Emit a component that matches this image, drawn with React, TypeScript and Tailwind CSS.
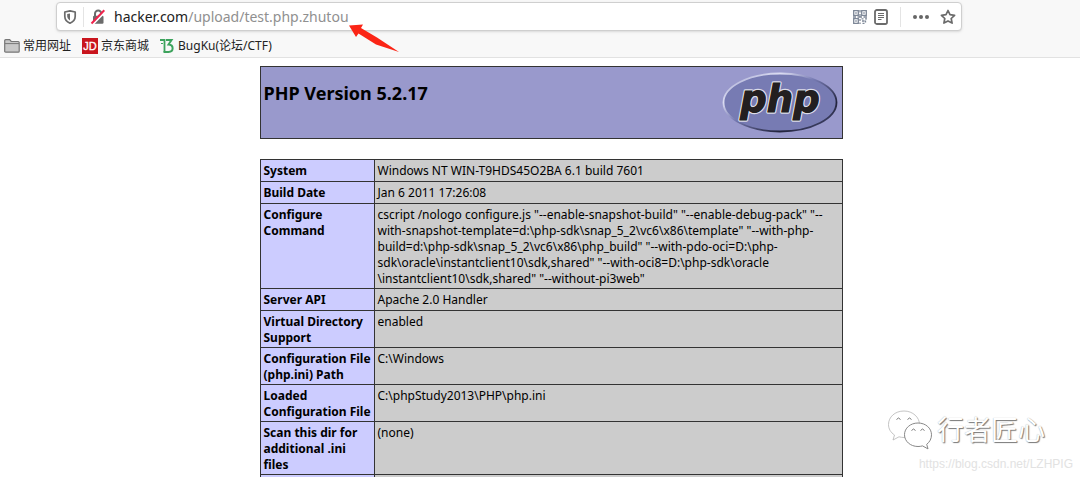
import React from "react";

const rows: { label: string; value: string }[] = [
  { label: "System", value: "Windows NT WIN-T9HDS45O2BA 6.1 build 7601" },
  { label: "Build Date", value: "Jan 6 2011 17:26:08" },
  {
    label: "Configure\nCommand",
    value:
      'cscript /nologo configure.js "--enable-snapshot-build" "--enable-debug-pack" "--\nwith-snapshot-template=d:\\php-sdk\\snap_5_2\\vc6\\x86\\template" "--with-php-\nbuild=d:\\php-sdk\\snap_5_2\\vc6\\x86\\php_build" "--with-pdo-oci=D:\\php-\nsdk\\oracle\\instantclient10\\sdk,shared" "--with-oci8=D:\\php-sdk\\oracle\n\\instantclient10\\sdk,shared" "--without-pi3web"',
  },
  { label: "Server API", value: "Apache 2.0 Handler" },
  { label: "Virtual Directory\nSupport", value: "enabled" },
  { label: "Configuration File\n(php.ini) Path", value: "C:\\Windows" },
  { label: "Loaded\nConfiguration File", value: "C:\\phpStudy2013\\PHP\\php.ini" },
  { label: "Scan this dir for\nadditional .ini\nfiles", value: "(none)" },
  { label: "", value: "" },
];

function ShieldIcon() {
  return (
    <svg width="14" height="16" viewBox="0 0 14 16" aria-hidden="true">
      <path d="M7 1.8 12.2 3v4.2c0 3.2-2 5.6-5.2 7-3.2-1.4-5.2-3.8-5.2-7V3z" fill="none" stroke="#6b6b6b" strokeWidth="1.7" strokeLinejoin="round" />
      <path d="M7 4.4v7C5.2 10.300 4.200 8.900 4.200 7V5z" fill="#6b6b6b" />
    </svg>
  );
}

function LockIcon() {
  return (
    <svg width="16" height="16" viewBox="0 0 16 16" aria-hidden="true">
      <path d="M5 7V4.800a3.200 3.200 0 0 1 6.400 0V7" fill="none" stroke="#6b6b6b" strokeWidth="2" />
      <rect x="3" y="6.700" width="10.500" height="8" rx="1.200" fill="#6b6b6b" />
      <path d="M2.600 15.600 15.400 2.400" stroke="#fff" strokeWidth="2" />
      <path d="M1.500 14.500 14.300 1.300" stroke="#f0244d" strokeWidth="2" />
    </svg>
  );
}

function QrIcon() {
  return (
    <svg width="14" height="14" viewBox="0 0 14 14" fill="none" stroke="#7d8797" strokeWidth="1.300" aria-hidden="true">
      <path d="M.7.7h4.600v4.600H.7zM8.700.7h4.600v4.600H8.700zM.7 8.700h4.600v4.600H.7z" />
      <path d="M2.300 3h1.400M10.300 3h1.400M2.300 11h1.400M7 0v2.500M7 4v3M0 7h3M4.500 7H9M10.500 7H14M7 9v2M7 12.500V14M8.500 8.800h2M12 8.800h2M9 11h2.500M12.500 10.500v2M9.500 13.300h2" />
    </svg>
  );
}

function ReaderIcon() {
  return (
    <svg width="14" height="16" viewBox="0 0 14 16" fill="none" stroke="#6b6b6b" aria-hidden="true">
      <rect x="1" y="1" width="12" height="14" rx="1.800" strokeWidth="1.800" />
      <path d="M4 4.500h6M4 6.500h6M4 8.500h6M4 10.500h3.500" strokeWidth="1.100" />
    </svg>
  );
}

function StarIcon() {
  return (
    <svg width="16" height="16" viewBox="0 0 16 16" aria-hidden="true">
      <path d="m8 1.500 2 4.200 4.600.6-3.400 3.200.9 4.600L8 11.900l-4.100 2.200.9-4.600L1.400 6.300 6 5.700z" fill="none" stroke="#6b6b6b" strokeWidth="1.700" strokeLinejoin="round" />
    </svg>
  );
}

function FolderIcon() {
  return (
    <svg width="16" height="14" viewBox="0 0 16 14" aria-hidden="true">
      <path d="M.7 12.200V1.700q0-1 1-1h4l1.500 1.800h7q1 0 1 1v8.700q0 1-1 1h-12.500q-1 0-1-1z" fill="#c8c8c8" stroke="#777" strokeWidth="1.200" />
      <path d="M1 4.600h14" stroke="#777" />
    </svg>
  );
}

function JdIcon() {
  return (
    <svg width="16" height="16" viewBox="0 0 16 16" aria-hidden="true">
      <rect width="16" height="16" fill="#c9151e" />
      <text x="8" y="12" textAnchor="middle" fontSize="11" fill="#fff" stroke="#fff" strokeWidth=".3" className="font-['Liberation_Sans',sans-serif]">JD</text>
    </svg>
  );
}

function BugKuIcon() {
  return (
    <svg width="14" height="16" viewBox="0 0 14 16" fill="none" stroke="#3da35d" aria-hidden="true">
      <path d="M0 2h4.500v12" strokeWidth="1.800" />
      <path d="M6 2h5.500L8.500 6.500c5.500.3 5.500 7.300 0 7.500H3.500" strokeWidth="2" />
      <path d="M1 5.500h2" strokeWidth="1" />
    </svg>
  );
}

function PhpLogo() {
  return (
    <svg width="120" height="67" viewBox="0 0 120 67" role="img" aria-label="PHP logo" className="shrink-0 font-['DejaVu_Sans',sans-serif] text-[37px] font-bold italic">
      <defs>
        <linearGradient id="rim" x1="0" y1="0" x2="1" y2="1">
          <stop offset="0" stopColor="#9a9dca" />
          <stop offset=".25" stopColor="#dcddf2" />
          <stop offset=".45" stopColor="#777bb3" />
          <stop offset=".75" stopColor="#22233c" />
          <stop offset="1" stopColor="#555987" />
        </linearGradient>
      </defs>
      <ellipse cx="60" cy="33.500" rx="56.500" ry="29" fill="#777bb3" stroke="url(#rim)" strokeWidth="1.800" />
      <text x="60" y="43" textAnchor="middle" fill="#231f20" stroke="#dcdce8" strokeWidth="3.500" strokeLinejoin="round" paintOrder="stroke">php</text>
      <text x="60" y="43" textAnchor="middle" fill="#231f20" stroke="#231f20" strokeWidth="1" aria-hidden="true">php</text>
    </svg>
  );
}

function WeChatIcon() {
  return (
    <svg width="46" height="42" viewBox="0 0 46 42" fill="#fff" strokeLinejoin="round" aria-hidden="true">
      <path d="M17 2C8 2 1.500 8 1.500 15.500c0 4.300 2.200 8 6 10.500L6 31l6-3.200c1.600.4 3.300.7 5 .7 9 0 15.500-6 15.500-13S26 2 17 2z" stroke="#b5b5b5" strokeWidth=".8" />
      <path d="M31 14c-7.700 0-13.500 5.200-13.500 11.700S23.300 37.500 31 37.500c1.600 0 3.100-.2 4.500-.6l5.500 3-1.300-4.600c3-2.200 4.800-5.600 4.800-9.500C44.500 19.200 38.700 14 31 14z" stroke="#888" strokeWidth="1" />
      <path d="M9.500 10.500q2-3 4 0M20.500 10.500q2-3 4 0M24.500 21.500q2-3 4 0M33.500 21.500q2-3 4 0" fill="none" stroke="#777" strokeWidth="1" />
    </svg>
  );
}

export default function App() {
  return (
    <div className="relative h-screen overflow-hidden bg-white font-['Noto_Sans','Noto_Sans_CJK_SC',sans-serif] text-black">
      <header className="border-b border-[#e2e2e2] bg-[#f8f8f8] pt-0.5">
        <div className="ml-14 mr-[118px] flex h-[29px] items-center rounded-sm border border-[#cfcfcf] bg-white pl-[6px] pr-[5px] shadow-sm">
          <button aria-label="Tracking protection"><ShieldIcon /></button>
          <span className="ml-[6px] h-5 w-px bg-[#e4e4e4]" />
          <button aria-label="Connection is not secure" className="ml-[6px]"><LockIcon /></button>
          <div className="ml-2 flex-1 text-sm text-[#909090]">
            <span className="text-[#222]">hacker.com</span>/upload/test.php.zhutou
          </div>
          <button aria-label="QR code"><QrIcon /></button>
          <button aria-label="Reader view" className="ml-[7px]"><ReaderIcon /></button>
          <span className="ml-3 h-5 w-px bg-[#e4e4e4]" />
          <button aria-label="Page actions" className="ml-3 flex gap-[2px]">
            <span className="size-1 rounded-full bg-[#666]" />
            <span className="size-1 rounded-full bg-[#666]" />
            <span className="size-1 rounded-full bg-[#666]" />
          </button>
          <button aria-label="Bookmark this page" className="ml-[11px]"><StarIcon /></button>
        </div>
        <nav className="flex h-[26px] items-center gap-[11px] pl-1 pt-1 text-[12px] leading-4 text-[#222]">
          <a href="#common" className="flex items-center gap-[3px] whitespace-nowrap"><FolderIcon />常用网址</a>
          <a href="#jd" className="flex items-center gap-[3px] whitespace-nowrap"><JdIcon />京东商城</a>
          <a href="#bugku" className="flex items-center gap-1 whitespace-nowrap"><BugKuIcon />BugKu(论坛/CTF)</a>
        </nav>
      </header>

      <main className="flex flex-col items-center pl-[22px] pt-2">
        <section className="flex h-[73px] w-full max-w-[583px] justify-between border border-[#333] bg-[#9999cc] pl-[3px] pr-[2px] pt-[2px]">
          <h1 className="pt-3 text-lg font-bold leading-6">PHP Version 5.2.17</h1>
          <PhpLogo />
        </section>

        <table className="mt-5 w-full max-w-[583px] table-fixed border-collapse text-[12px] leading-4">
          <colgroup>
            <col className="w-[114px]" />
            <col />
          </colgroup>
          <tbody>
            {rows.map((row) => (
              <tr key={row.label} className="h-[22px]">
                <th scope="row" className="whitespace-pre border border-[#333] bg-[#ccccff] pb-px pl-[3px] pt-[3px] text-left align-top font-bold">{row.label}</th>
                <td className="whitespace-pre border border-[#333] bg-[#cccccc] pb-px pl-[3px] pt-[3px] align-top">{row.value}</td>
              </tr>
            ))}
          </tbody>
        </table>
      </main>

      <svg className="absolute left-[348px] top-[24px]" width="52" height="30" viewBox="0 0 52 30" aria-hidden="true">
        <path d="M1 1.500 15 .5l-2 3.500L29 13.500 51 28 28 20.500 10.500 9.500 8 13z" fill="#fb2516" />
      </svg>

      <div className="absolute right-[35px] top-[409px] flex items-center gap-1">
        <WeChatIcon />
        <span className="text-[27px] leading-10 text-white [text-shadow:1px_1px_1px_#777,0_0_1px_#aaa]">行者匠心</span>
      </div>
      <div className="absolute right-[7px] top-[456px] font-['Liberation_Sans',sans-serif] text-[12px] leading-4 text-[#e2e2e2]">https://blog.csdn.net/LZHPIG</div>
    </div>
  );
}
